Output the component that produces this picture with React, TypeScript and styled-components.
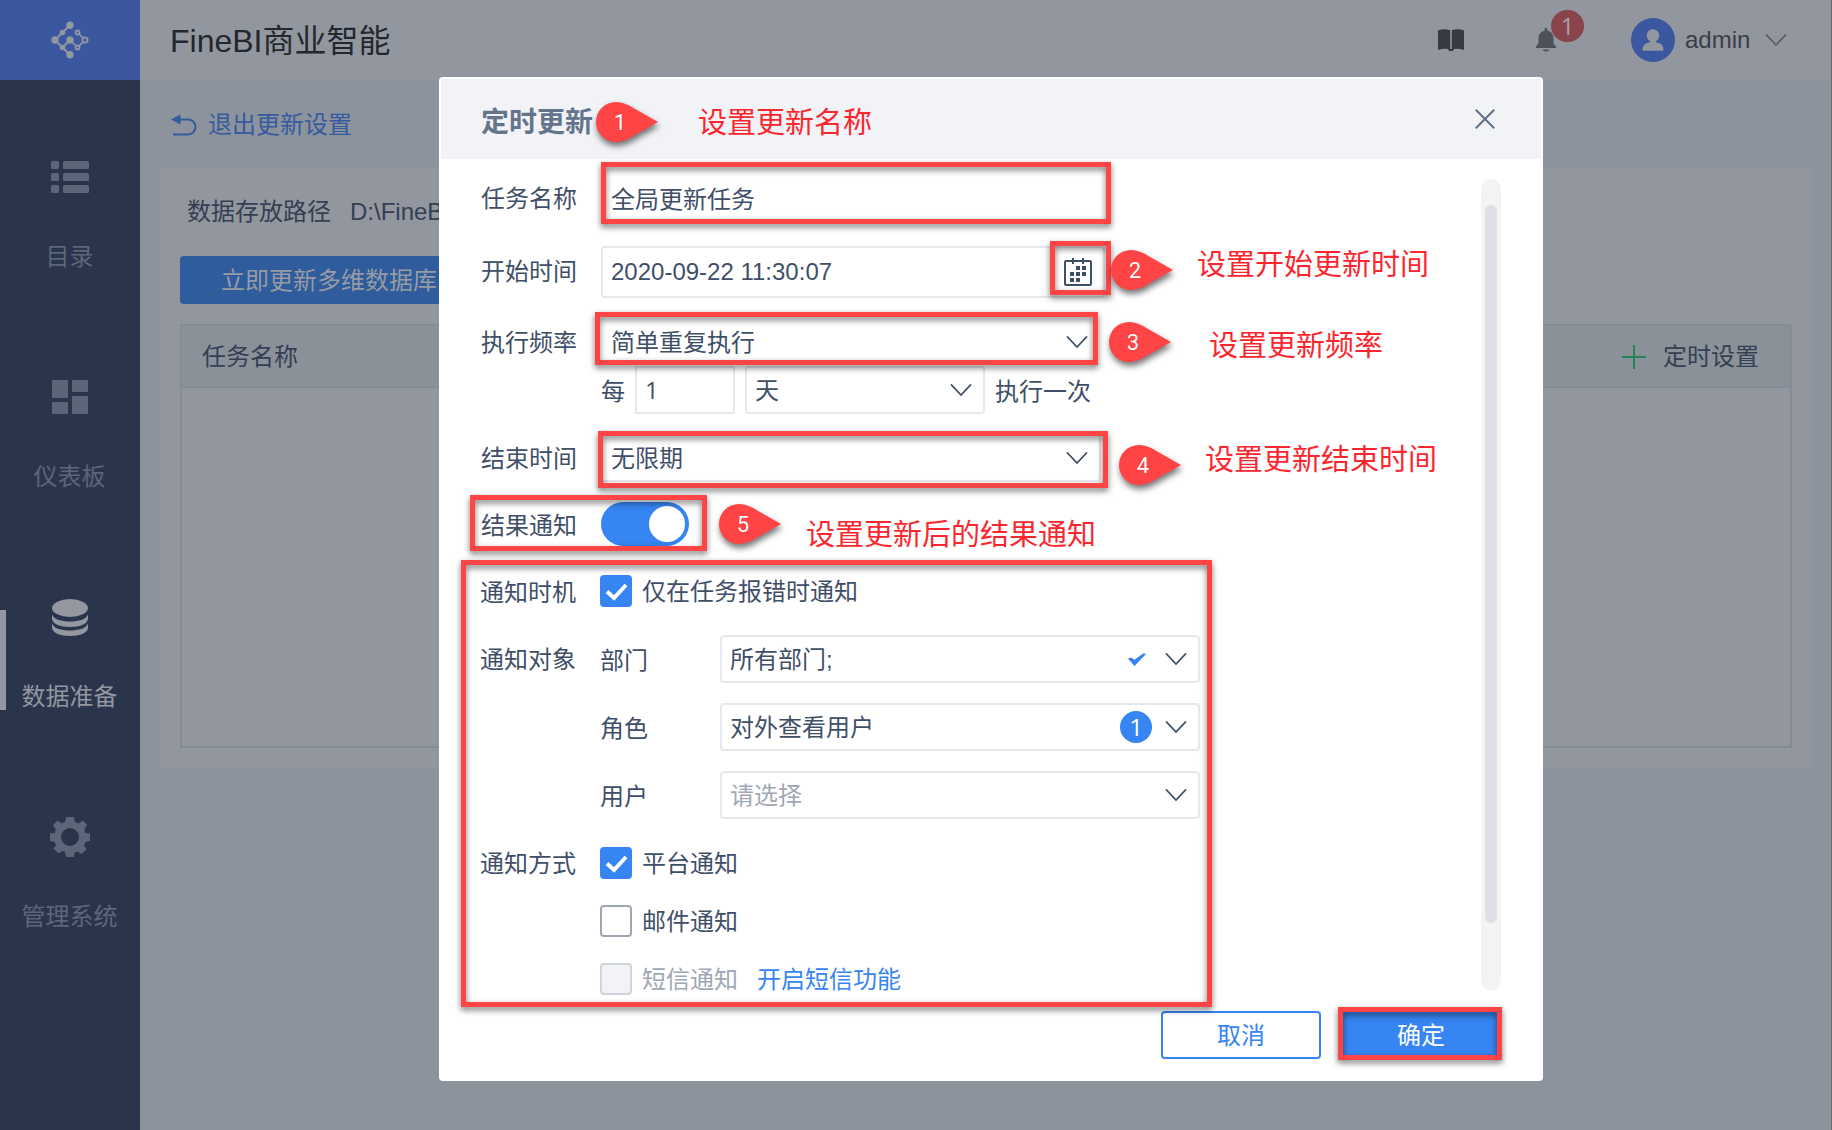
import React from "react";
import styled, { createGlobalStyle } from "styled-components";

const Global = createGlobalStyle`
  * { box-sizing: border-box; }
  html, body { margin: 0; padding: 0; }
  body {
    font-family: "Liberation Sans", "Noto Sans CJK SC", sans-serif;
    font-size: 24px;
    line-height: 36px;
    color: #3f4f68;
    overflow: hidden;
  }
`;

/* ---------- page shell ---------- */

const Page = styled.div`
  position: relative;
  display: flex;
  width: 1832px;
  height: 1130px;
  overflow: hidden;
  background: #8c939c;
  border-right: 1px solid #666b6e;
`;

const Sidebar = styled.nav`
  display: flex;
  flex-direction: column;
  width: 140px;
  flex: none;
  background: #2a354c;
`;

const Logo = styled.div`
  display: flex;
  align-items: center;
  justify-content: center;
  height: 80px;
  background: #3a579f;
  margin-bottom: 60px;
`;

const NavItem = styled.div<{ $active?: boolean }>`
  position: relative;
  display: flex;
  flex-direction: column;
  align-items: center;
  height: 220px;
  color: ${(p) => (p.$active ? "#9297a0" : "#5c6678")};
  &::before {
    content: "";
    display: ${(p) => (p.$active ? "block" : "none")};
    position: absolute;
    left: 0;
    top: 30px;
    width: 6px;
    height: 100px;
    background: #9297a0;
  }
`;

const NavIcon = styled.div`
  display: flex;
  align-items: center;
  justify-content: center;
  height: 74px;
  margin-bottom: 25px;
`;

const NavText = styled.span`
  line-height: 36px;
  margin-right: 1px;
`;

const Main = styled.div`
  flex: 1;
  display: flex;
  flex-direction: column;
  min-width: 0;
`;

const Header = styled.header`
  display: flex;
  align-items: center;
  height: 80px;
  padding: 0 44px 0 30px;
  background: #92969e;
  color: #23272f;
`;

const Brand = styled.h1`
  margin: 1px 0 0;
  flex: 1;
  font-size: 32px;
  line-height: 48px;
  font-weight: 400;
`;

const BellWrap = styled.div`
  position: relative;
  display: flex;
  width: 20px;
  margin: 0 75px 0 72px;
`;

const BellBadge = styled.span`
  position: absolute;
  left: 15px;
  top: -18px;
  width: 33px;
  height: 32px;
  border-radius: 16px;
  background: #8a444c;
  color: #a5a3a9;
  font-family: "Open Sans", sans-serif;
  line-height: 31px;
  text-align: center;
`;

const Avatar = styled.div`
  display: flex;
  align-items: center;
  justify-content: center;
  width: 44px;
  height: 44px;
  border-radius: 50%;
  background: #3a579f;
  margin-right: 10px;
`;

const UserName = styled.span`
  width: 80px;
  color: #3a3e46;
`;

const BackLink = styled.div`
  display: flex;
  align-items: center;
  gap: 11px;
  height: 88px;
  padding: 2px 0 0 31px;
  color: #345b9f;
`;

const Card = styled.section`
  display: flex;
  flex-direction: column;
  height: 600px;
  margin: 0 19px 0 20px;
  padding: 26px 20px 20px;
  background: #92969e;
`;

const PathLine = styled.div`
  display: flex;
  gap: 19px;
  padding-left: 7px;
  height: 62px;
  white-space: nowrap;
  color: #343f53;
`;

const UpdateButton = styled.button`
  width: 300px;
  height: 48px;
  margin-bottom: 20px;
  padding: 2px 41px 0;
  border: 0;
  border-radius: 4px;
  background: #2e5c9c;
  color: #979ba3;
  font: inherit;
  text-align: left;
`;

const Table = styled.div`
  flex: 1;
  border: 2px solid #868c96;
`;

const TableHead = styled.div`
  display: flex;
  align-items: center;
  height: 62px;
  padding: 1px 31px 0 20px;
  background: #8a9199;
  border-bottom: 2px solid #868c96;
  color: #343f53;
`;

const AddAction = styled.div`
  display: flex;
  align-items: center;
  gap: 17px;
  margin-left: auto;
`;

/* ---------- dialog ---------- */

const Dialog = styled.div`
  position: absolute;
  left: 439px;
  top: 77px;
  display: flex;
  flex-direction: column;
  width: 1104px;
  height: 1004px;
  padding: 2px;
  border-radius: 4px;
  background: #fff;
`;

const DialogHeader = styled.div`
  display: flex;
  align-items: center;
  justify-content: space-between;
  height: 80px;
  padding: 0 46px 0 40px;
  background: #f2f3f7;
`;

const DialogTitle = styled.h2`
  margin: 8px 0 0;
  font-size: 28px;
  line-height: 40px;
  color: #64758b;
`;

const DialogBody = styled.div`
  display: flex;
  justify-content: space-between;
  height: 852px;
  padding: 15px 40px 0 40px;
`;

const Form = styled.div`
  display: flex;
  flex-direction: column;
  width: 730px;
`;

const Row = styled.div<{ $h?: number; $mb?: number }>`
  display: flex;
  align-items: center;
  height: ${(p) => p.$h ?? 48}px;
  margin-bottom: ${(p) => p.$mb ?? 20}px;
`;

const Label = styled.span<{ $w?: number; $shift?: number; $drop?: number }>`
  flex: none;
  width: ${(p) => p.$w ?? 120}px;
  margin-left: ${(p) => p.$shift ?? 0}px;
  padding-top: ${(p) => (p.$drop ?? 0) * 2}px;
`;

const Field = styled.div<{
  $w: number;
  $h?: number;
  $plain?: boolean;
  $square?: boolean;
  $placeholder?: boolean;
}>`
  display: flex;
  align-items: center;
  width: ${(p) => p.$w}px;
  height: ${(p) => p.$h ?? 48}px;
  padding: 0 11px 0 8px;
  border: 2px solid ${(p) => (p.$plain ? "transparent" : "#e7e8ed")};
  border-radius: ${(p) => (p.$square ? 0 : 4)}px;
  color: ${(p) => (p.$placeholder ? "#9fa7b5" : "inherit")};
  white-space: nowrap;
`;

const Grow = styled.span<{ $drop?: number }>`
  flex: 1;
  padding-top: ${(p) => (p.$drop ?? 0) * 2}px;
`;

const Digit = styled.span`
  font-family: "Open Sans", sans-serif;
`;

const Count = styled.span`
  width: 32px;
  height: 32px;
  margin-right: 13px;
  border-radius: 50%;
  background: #3685f2;
  color: #fff;
  font-family: "Open Sans", sans-serif;
  line-height: 31px;
  text-align: center;
`;

const TickWrap = styled.span`
  display: flex;
  margin-right: 19px;
`;

const Switch = styled.div`
  display: flex;
  justify-content: flex-end;
  align-items: center;
  width: 88px;
  height: 44px;
  padding-right: 4px;
  border-radius: 22px;
  background: #3685f2;
`;

const Knob = styled.div`
  width: 36px;
  height: 36px;
  border-radius: 50%;
  background: #fff;
`;

const Box = styled.span<{ $state: "on" | "off" | "disabled" }>`
  display: flex;
  align-items: center;
  justify-content: center;
  flex: none;
  width: 32px;
  height: 32px;
  margin-right: 10px;
  border-radius: 4px;
  border: 2px solid
    ${(p) => ({ on: "#3685f2", off: "#9ea6b4", disabled: "#cfd3da" })[p.$state]};
  background: ${(p) => ({ on: "#3685f2", off: "#fff", disabled: "#f2f3f7" })[p.$state]};
`;

const OptionText = styled.span<{ $muted?: boolean }>`
  padding-top: 1px;
  color: ${(p) => (p.$muted ? "#9fa7b5" : "inherit")};
`;

const Link = styled.a`
  margin-left: 19px;
  padding-top: 1px;
  color: #3685f2;
`;

const Scrollbar = styled.div`
  width: 20px;
  height: 812px;
  margin-top: 5px;
  padding: 26px 4px 0;
  border-radius: 10px;
  background: #f3f3f4;
`;

const Thumb = styled.div`
  height: 718px;
  border-radius: 6px;
  background: #dddfe4;
`;

const Footer = styled.div`
  display: flex;
  justify-content: flex-end;
  gap: 20px;
  padding-right: 40px;
`;

const Button = styled.button<{ $primary?: boolean }>`
  width: 160px;
  height: 48px;
  padding: 1px 0 0;
  border: 2px solid #3685f2;
  border-radius: 4px;
  background: ${(p) => (p.$primary ? "#3685f2" : "#fff")};
  color: ${(p) => (p.$primary ? "#fff" : "#3685f2")};
  font: inherit;
`;

/* ---------- annotations laid over the dialog ---------- */

type Rect = { x: number; y: number; w: number; h: number };

const Frame = styled.div<{ $r: Rect }>`
  position: absolute;
  left: ${(p) => p.$r.x}px;
  top: ${(p) => p.$r.y}px;
  width: ${(p) => p.$r.w}px;
  height: ${(p) => p.$r.h}px;
  border: 5px solid #fe4444;
  filter: drop-shadow(0 3px 3px rgba(0, 0, 0, 0.55));
`;

const MarkerBox = styled.div<{ $x: number; $y: number }>`
  position: absolute;
  left: ${(p) => p.$x}px;
  top: ${(p) => p.$y}px;
  width: 62px;
  height: 40px;
  filter: drop-shadow(1px 4px 3px rgba(0, 0, 0, 0.55));
  svg { display: block; }
`;

const MarkerNumber = styled.span`
  position: absolute;
  left: 0;
  top: 0;
  width: 48px;
  color: #fff;
  font-family: Roboto, sans-serif;
  font-size: 22px;
  line-height: 41px;
  text-align: center;
`;

const Note = styled.span<{ $x: number; $y: number }>`
  position: absolute;
  left: ${(p) => p.$x}px;
  top: ${(p) => p.$y}px;
  font-size: 29px;
  line-height: 40px;
  white-space: nowrap;
  color: #fc262e;
`;

/* ---------- icons ---------- */

const Chevron = ({ color = "#3f4f68" }: { color?: string }) => (
  <svg width="22" height="13" viewBox="0 0 22 13" fill="none" stroke={color} strokeWidth="1.800">
    <path d="M1 .5l10 10.500L21 .5" />
  </svg>
);

const LogoIcon = () => (
  <svg width="38" height="38" viewBox="0 0 38 38" fill="#9297a0" stroke="#9297a0">
    <path d="M19 4L4 19l15 15M11.500 26.500L19 19" fill="none" strokeWidth="2" />
    <path d="M19 19l7.500 7.500L34 19l-7.500-7.500" fill="none" strokeWidth="1.600" />
    <g stroke="none">
      <circle cx="19" cy="4.200" r="3.700" />
      <circle cx="4" cy="19" r="3.700" />
      <circle cx="19" cy="19" r="3.700" />
      <circle cx="19" cy="33.800" r="3.700" />
      <circle cx="11.500" cy="11.500" r="2.800" />
      <circle cx="11.500" cy="26.500" r="2.800" />
    </g>
    <g fill="#3a579f" strokeWidth="1.800">
      <circle cx="26.500" cy="11.500" r="2" />
      <circle cx="26.500" cy="26.500" r="2" />
      <circle cx="34" cy="19" r="2.600" />
    </g>
  </svg>
);

const ListIcon = () => (
  <svg width="38" height="32" viewBox="0 0 38 32" fill="currentColor">
    {[0, 12, 24].map((y) => (
      <g key={y}>
        <rect x="0" y={y} width="8" height="8" rx="1.500" />
        <rect x="12" y={y} width="26" height="8" rx="1.500" />
      </g>
    ))}
  </svg>
);

const BoardIcon = () => (
  <svg width="36" height="34" viewBox="0 0 36 34" fill="currentColor">
    <rect x="0" y="0" width="16" height="18" rx="1" />
    <rect x="20" y="0" width="16" height="12" rx="1" />
    <rect x="0" y="22" width="16" height="12" rx="1" />
    <rect x="20" y="16" width="16" height="18" rx="1" />
  </svg>
);

const DataIcon = () => (
  <svg width="36" height="37" viewBox="0 0 36 37" fill="currentColor">
    <ellipse cx="18" cy="9" rx="18" ry="9" />
    <path d="M0 15.500c2 5 9.500 7 18 7s16-2 18-7v4c0 5-8 8.500-18 8.500S0 24.500 0 19.500z" />
    <path d="M0 24.500c2 5 9.500 7 18 7s16-2 18-7v4c0 5-8 8.500-18 8.500S0 33.500 0 28.500z" />
  </svg>
);

const GearIcon = () => (
  <svg width="40" height="40" viewBox="0 0 40 40" fill="currentColor">
    <path
      fillRule="evenodd"
      d="M16 0h8l1 5 3.500 1.500L33 3.500 37 8l-2.500 4.500L35 16l5 .5v7.500l-4.500.8-1.500 3.700 2.500 3.500-5 5-4-2.500-2.800 1L24 40h-8l-1-5-2.500-1-4 2.500-5-5L6 28l-1.500-3.200L0 24v-7.500l5-.5.8-3.500L3 8l4.500-4.500 4 3L15 5zM20 11a9 9 0 1 0 0 18 9 9 0 0 0 0-18z"
    />
  </svg>
);

const BookIcon = () => (
  <svg width="26" height="22" viewBox="0 0 26 22" fill="#363a43">
    <path d="M0 1.500C4 0 9 0 12.200 1.300V20.500C9 19.500 4 19.700 0 21z" />
    <path d="M26 1.500C22 0 17 0 13.800 1.300V20.500C17 19.500 22 19.700 26 21z" />
    <path d="M10 20h6l-1 2h-4z" />
  </svg>
);

const BellIcon = () => (
  <svg width="20" height="24" viewBox="0 0 20 24" fill="#4d515a">
    <path d="M8.800 0h2.400v2.500c4 .8 6.300 4 6.300 8V15.500L20 18.500V20H0v-1.500L2.500 15.500v-5c0-4 2.300-7.200 6.300-8z" />
    <path d="M6.500 21.500h7C12.500 24 7.500 24 6.500 21.500z" />
  </svg>
);

const PersonIcon = () => (
  <svg width="22" height="24" viewBox="0 0 22 24" fill="#9297a0">
    <circle cx="11" cy="7.500" r="6.300" />
    <path d="M8 12h6v2.300c5 .8 7.500 3.200 7.500 7.200 0 .8-.5 1.300-1.500 1.300H2c-1 0-1.500-.5-1.500-1.300 0-4 2.500-6.400 7.500-7.200z" />
  </svg>
);

const BackIcon = () => (
  <svg width="26" height="22" viewBox="0 0 26 22" fill="none" stroke="#345b9f" strokeWidth="2">
    <path d="M9 5.500h8a7.500 7.500 0 0 1 0 15H2" />
    <path d="M0 5.500L9.500.5v10z" fill="#345b9f" stroke="none" />
  </svg>
);

const PlusIcon = () => (
  <svg width="24" height="24" viewBox="0 0 24 24" stroke="#1f8556" strokeWidth="2">
    <path d="M12 0v24M0 12h24" />
  </svg>
);

const CloseIcon = () => (
  <svg width="20" height="20" viewBox="0 0 20 20" stroke="#5f7085" strokeWidth="2">
    <path d="M.8.800l18.400 18.400M19.200.800L.8 19.200" />
  </svg>
);

const CalendarIcon = () => (
  <svg width="28" height="28" viewBox="0 0 28 28" fill="#3f4f68">
    <rect x="1" y="3" width="26" height="24" rx="1" fill="none" stroke="#3f4f68" strokeWidth="2" />
    <path d="M8 0h2v6H8zM18 0h2v6h-2z" />
    <path d="M12 8h4v4h-4zM18 8h4v4h-4zM6 14h4v4H6zM12 14h4v4h-4zM18 14h4v4h-4zM6 20h4v4H6zM12 20h4v4h-4z" />
  </svg>
);

const CheckIcon = () => (
  <svg width="24" height="20" viewBox="0 0 24 20" fill="none" stroke="#fff" strokeWidth="4">
    <path d="M3 10.500L10 17 22 4" />
  </svg>
);

const TickIcon = () => (
  <svg width="18" height="13" viewBox="0 0 18 13" fill="#3685f2">
    <path d="M0 5.500l3-1 3.500 2.300L15.500.3 18 1 6.500 13z" />
  </svg>
);

/* ---------- parts ---------- */

const Marker = ({ n, x, y }: { n: number; x: number; y: number }) => (
  <MarkerBox $x={x} $y={y}>
    <svg width="62" height="40" viewBox="0 0 62 40" fill="#fe4444">
      <path d="M20 0C28 0 34 4 40 7.500L62 20 40 32.500C34 36 28 40 20 40A20 20 0 0 1 20 0z" />
    </svg>
    <MarkerNumber>{n}</MarkerNumber>
  </MarkerBox>
);

const frames: Rect[] = [
  { x: 601, y: 162, w: 510, h: 62 },
  { x: 1050, y: 241, w: 61, h: 54 },
  { x: 595, y: 312, w: 503, h: 53 },
  { x: 598, y: 431, w: 510, h: 57 },
  { x: 470, y: 495, w: 237, h: 56 },
  { x: 461, y: 560, w: 751, h: 447 },
  { x: 1338, y: 1007, w: 164, h: 53 },
];

const markers = [
  { n: 1, x: 596, y: 102 },
  { n: 2, x: 1111, y: 250 },
  { n: 3, x: 1109, y: 322 },
  { n: 4, x: 1119, y: 445 },
  { n: 5, x: 719, y: 504 },
];

const notes = [
  { text: "设置更新名称", x: 698, y: 103 },
  { text: "设置开始更新时间", x: 1197, y: 245 },
  { text: "设置更新频率", x: 1209, y: 326 },
  { text: "设置更新结束时间", x: 1205, y: 440 },
  { text: "设置更新后的结果通知", x: 806, y: 515 },
];

const nav = [
  { text: "目录", icon: <ListIcon /> },
  { text: "仪表板", icon: <BoardIcon /> },
  { text: "数据准备", icon: <DataIcon />, active: true },
  { text: "管理系统", icon: <GearIcon /> },
];

export default function App() {
  return (
    <Page>
      <Global />
      <Sidebar>
        <Logo>
          <LogoIcon />
        </Logo>
        {nav.map((n) => (
          <NavItem key={n.text} $active={n.active}>
            <NavIcon>{n.icon}</NavIcon>
            <NavText>{n.text}</NavText>
          </NavItem>
        ))}
      </Sidebar>
      <Main>
        <Header>
          <Brand>FineBI商业智能</Brand>
          <BookIcon />
          <BellWrap>
            <BellIcon />
            <BellBadge>1</BellBadge>
          </BellWrap>
          <Avatar>
            <PersonIcon />
          </Avatar>
          <UserName>admin</UserName>
          <Chevron color="#5a5f68" />
        </Header>
        <BackLink>
          <BackIcon />
          退出更新设置
        </BackLink>
        <Card>
          <PathLine>
            <span>数据存放路径</span>
            <span>D:\FineB</span>
          </PathLine>
          <UpdateButton>立即更新多维数据库</UpdateButton>
          <Table>
            <TableHead>
              任务名称
              <AddAction>
                <PlusIcon />
                定时设置
              </AddAction>
            </TableHead>
          </Table>
        </Card>
      </Main>

      <Dialog>
        <DialogHeader>
          <DialogTitle>定时更新</DialogTitle>
          <CloseIcon />
        </DialogHeader>
        <DialogBody>
          <Form>
            <Row $mb={24}>
              <Label $drop={0.5}>任务名称</Label>
              <Field $w={504} $plain>
                <Grow $drop={2}>全局更新任务</Grow>
              </Field>
            </Row>
            <Row $h={52}>
              <Label $drop={-0}>开始时间</Label>
              <Field $w={504} $h={52}>
                <Grow>2020-09-22 11:30:07</Grow>
                <CalendarIcon />
              </Field>
            </Row>
            <Row $mb={0}>
              <Label $drop={0.5}>执行频率</Label>
              <Field $w={500} $plain>
                <Grow $drop={0.5}>简单重复执行</Grow>
                <Chevron />
              </Field>
            </Row>
            <Row>
              <Label $w={34} $shift={120} $drop={2}>
                每
              </Label>
              <Field $w={100} $square>
                <Digit>1</Digit>
              </Field>
              <Label $w={10} />
              <Field $w={240}>
                <Grow $drop={0.5}>天</Grow>
                <Chevron />
              </Field>
              <Label $shift={10} $w={100} $drop={2}>
                执行一次
              </Label>
            </Row>
            <Row>
              <Label $drop={0.5}>结束时间</Label>
              <Field $w={500}>
                <Grow $drop={0.5}>无限期</Grow>
                <Chevron />
              </Field>
            </Row>
            <Row $h={44} $mb={29}>
              <Label $drop={2}>结果通知</Label>
              <Switch>
                <Knob />
              </Switch>
            </Row>
            <Row $h={32} $mb={28}>
              <Label $shift={-1} $drop={2}>
                通知时机
              </Label>
              <Box $state="on">
                <CheckIcon />
              </Box>
              <OptionText>仅在任务报错时通知</OptionText>
            </Row>
            <Row>
              <Label $shift={-1} $drop={0.5}>
                通知对象
              </Label>
              <Label $drop={2}>部门</Label>
              <Field $w={480}>
                <Grow $drop={0.5}>所有部门;</Grow>
                <TickWrap>
                  <TickIcon />
                </TickWrap>
                <Chevron />
              </Field>
            </Row>
            <Row>
              <Label $shift={119} $drop={2}>
                角色
              </Label>
              <Field $w={480}>
                <Grow $drop={0.5}>对外查看用户</Grow>
                <Count>1</Count>
                <Chevron />
              </Field>
            </Row>
            <Row $mb={28}>
              <Label $shift={119} $drop={2}>
                用户
              </Label>
              <Field $w={480} $placeholder>
                <Grow $drop={0.5}>请选择</Grow>
                <Chevron />
              </Field>
            </Row>
            <Row $h={32} $mb={26}>
              <Label $shift={-1} $drop={0.5}>
                通知方式
              </Label>
              <Box $state="on">
                <CheckIcon />
              </Box>
              <OptionText>平台通知</OptionText>
            </Row>
            <Row $h={32} $mb={26}>
              <Label $w={0} $shift={119} />
              <Box $state="off" />
              <OptionText>邮件通知</OptionText>
            </Row>
            <Row $h={32} $mb={0}>
              <Label $w={0} $shift={119} />
              <Box $state="disabled" />
              <OptionText $muted>短信通知</OptionText>
              <Link>开启短信功能</Link>
            </Row>
          </Form>
          <Scrollbar>
            <Thumb />
          </Scrollbar>
        </DialogBody>
        <Footer>
          <Button>取消</Button>
          <Button $primary>确定</Button>
        </Footer>
      </Dialog>

      {frames.map((r) => (
        <Frame key={`${r.x}-${r.y}`} $r={r} />
      ))}
      {markers.map((m) => (
        <Marker key={m.n} {...m} />
      ))}
      {notes.map((t) => (
        <Note key={t.text} $x={t.x} $y={t.y}>
          {t.text}
        </Note>
      ))}
    </Page>
  );
}
